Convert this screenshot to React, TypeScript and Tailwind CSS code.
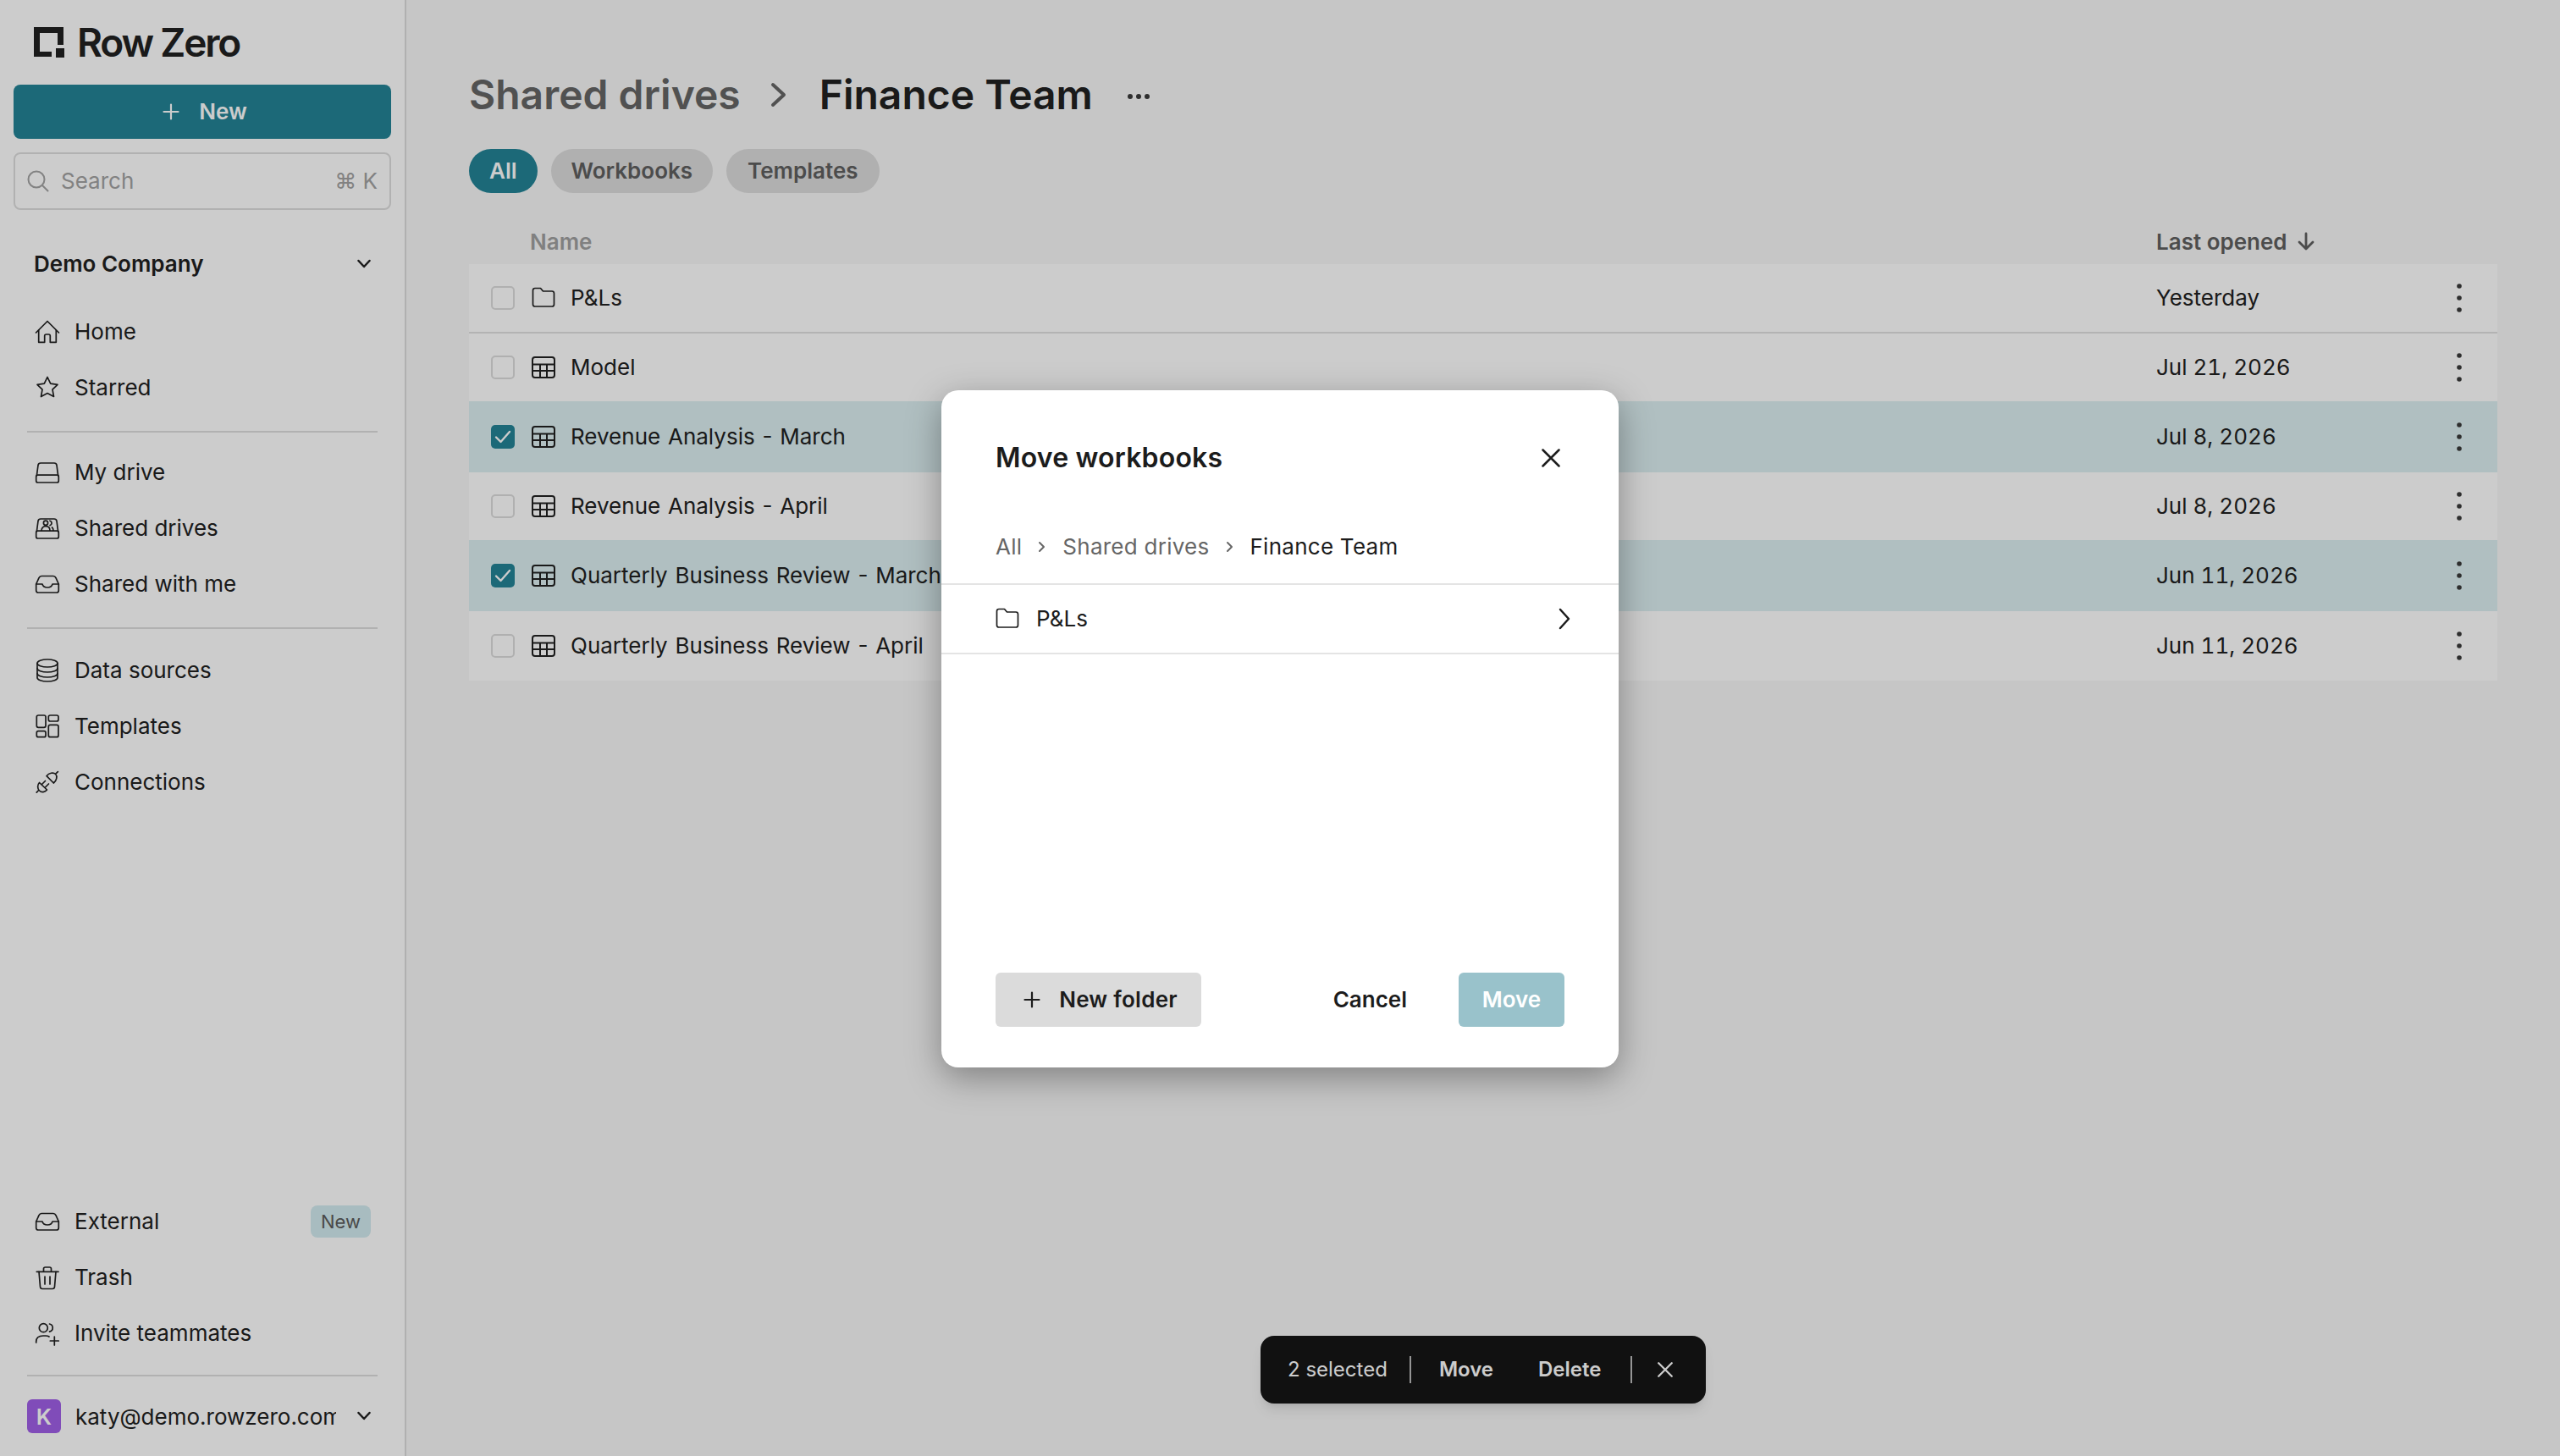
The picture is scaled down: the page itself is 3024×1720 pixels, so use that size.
const ink = "#212121";

const Icon = ({ children, size = 32, sw = 1.7 }: { children: React.ReactNode; size?: number; sw?: number }) => (
  <svg
    width={size}
    height={size}
    viewBox="0 0 32 32"
    fill="none"
    stroke="currentColor"
    strokeWidth={sw}
    strokeLinecap="round"
    strokeLinejoin="round"
    className="shrink-0"
  >
    {children}
  </svg>
);

const TrayIcon = () => (
  <Icon>
    <path d="M2.7 16 6 8.7Q7 6.5 9 6.5h14q2 0 3 2.2l3.3 7.3v7.5q0 2.5-2.5 2.5H5.2q-2.5 0-2.5-2.5z" />
    <path d="M2.7 16H10q1 4 6 4t6-4h7.3" />
  </Icon>
);

const DriveIcon = ({ shared }: { shared?: boolean }) => (
  <Icon>
    <rect x="2.7" y="19.2" width="26.6" height="8.8" rx="2" />
    <path d="M3.4 19.6 5 7.5Q5.4 5 8 5h16q2.6 0 3 2.5l1.6 12.1" />
    {shared && (
      <>
        <circle cx="14" cy="9.8" r="2.6" />
        <path d="M9 19c0-3.500 2-5.300 5-5.300s5 1.800 5 5.300M19 7.200a2.800 2.800 0 0 1 0 5.400M21.500 15c1 .8 1.500 2.200 1.500 4" />
      </>
    )}
  </Icon>
);

const navIcons: Record<string, React.ReactNode> = {
  Home: (
    <Icon>
      <path d="M2.5 17 16 3.5 29.5 17" />
      <path d="M5.7 14v14.3h7v-7.5q0-1.8 1.8-1.8h3q1.8 0 1.8 1.8v7.5h7V14" />
    </Icon>
  ),
  Starred: (
    <Icon>
      <path d="m16 3.5 3.7 7.7 8.3 1.1-6 5.9 1.5 8.3-7.5-4-7.5 4 1.5-8.3-6-5.9 8.3-1.1z" />
    </Icon>
  ),
  "My drive": <DriveIcon />,
  "Shared drives": <DriveIcon shared />,
  "Shared with me": <TrayIcon />,
  "Data sources": (
    <Icon>
      <ellipse cx="16" cy="7.5" rx="12" ry="4.5" />
      <path d="M4 7.5v17c0 2.5 5.4 4.5 12 4.5s12-2 12-4.5v-17" />
      <path d="M4 13.5c0 2.5 5.4 4.5 12 4.5s12-2 12-4.5M4 19.5c0 2.5 5.4 4.5 12 4.5s12-2 12-4.5" />
    </Icon>
  ),
  Templates: (
    <Icon>
      <rect x="3.3" y="3" width="10.7" height="14.3" rx="2" />
      <rect x="3.3" y="21.7" width="10.7" height="7" rx="2" />
      <rect x="17.3" y="3" width="11.7" height="7" rx="2" />
      <rect x="17.3" y="14.3" width="11.700" height="14.400" rx="2" />
    </Icon>
  ),
  Connections: (
    <Icon>
      <path d="M15 8.700 23.300 17C27 14 28 9 25.700 6.500 23 4 18 5 15 8.700zM25.700 6.200l2.700-2.600" />
      <path d="M6.500 16.500 15.500 25C13 28 9 28.500 6.500 26 4 23.500 4 19 6.500 16.500zM5.700 25.500 3.200 28.200M9.500 18.500l4-4M13.500 22l4-4" />
    </Icon>
  ),
  External: <TrayIcon />,
  Trash: (
    <Icon>
      <path d="M3.300 9.300h25.700M11.500 9V6q0-2 2-2h5q2 0 2 2v3" />
      <path d="m6 9.300 1.500 17.700q.2 2.500 2.500 2.500h12q2.300 0 2.500-2.500L26 9.300M13 15v9M19 15v9" />
    </Icon>
  ),
  "Invite teammates": (
    <Icon>
      <circle cx="11.300" cy="9.700" r="5" />
      <path d="M18.500 5a4.700 4.700 0 0 1 0 9.200M2.700 27v-1c0-4.500 3.300-7 8.300-7h3q2.500 0 4 1M24.300 20v10M19.300 25h10" />
    </Icon>
  ),
};

const FolderIcon = () => (
  <Icon>
    <path d="M3.500 7q0-2.500 2.500-2.500h6.500L15.500 8H26q2.500 0 2.500 2.500v13q0 2.500-2.500 2.500H6q-2.500 0-2.500-2.500z" />
  </Icon>
);

const TableIcon = () => (
  <Icon sw={2}>
    <rect x="3" y="4" width="26" height="24" rx="3" />
    <path d="M3 12.500h26M3 20h26M12 12.500V28M20 12.500V28" />
  </Icon>
);

const ChevronDown = () => (
  <svg width="16" height="12" viewBox="0 0 16 12" fill="none" stroke="currentColor" strokeWidth="2.500" strokeLinecap="round" strokeLinejoin="round">
    <path d="m1.500 2 6.500 7 6.500-7" />
  </svg>
);

const Close = ({ size = 22, sw = 2.500 }: { size?: number; sw?: number }) => (
  <svg width={size} height={size} viewBox="0 0 22 22" fill="none" stroke="currentColor" strokeWidth={sw} strokeLinecap="round">
    <path d="m1.500 1.500 19 19M20.500 1.500l-19 19" />
  </svg>
);

const Plus = ({ size = 20 }: { size?: number }) => (
  <svg width={size} height={size} viewBox="0 0 20 20" fill="none" stroke="currentColor" strokeWidth="2.200" strokeLinecap="round">
    <path d="M10 1.500v17M1.500 10h17" />
  </svg>
);

const NavItem = ({ label, badge }: { label: string; badge?: string }) => (
  <div className="flex h-[66px] items-center gap-[16px] pl-[40px] pr-[40px]">
    {navIcons[label]}
    <span className="text-[26px] leading-none">{label}</span>
    {badge && (
      <span className="ml-auto flex h-[38px] w-[71px] items-center justify-center rounded-lg bg-[#d3ebf0] text-[22px] text-[#5c5c5c]">
        {badge}
      </span>
    )}
  </div>
);

const Divider = () => <div className="mx-[32px] h-[2px] bg-[#dedede]" />;

const Sidebar = () => (
  <aside className="flex h-full w-[480px] shrink-0 flex-col border-r-2 border-[#dcdcdc] bg-white">
    <div className="flex h-[100px] items-start gap-[15px] pl-[40px] pt-[32px]">
      <svg width="36" height="36" viewBox="0 0 36 36" className="shrink-0" fill={ink}>
        <path d="M0 0h35v21h-7V7H7v22h14v6H0z" />
        <rect x="26" y="25" width="10" height="11" />
      </svg>
      <span className="text-[46px] font-semibold leading-[36px] tracking-[-0.047em]">Row Zero</span>
    </div>
    <div className="flex flex-col gap-[16px] px-[16px]">
      <button className="flex h-[64px] items-center justify-center gap-[23px] rounded-lg bg-[#238497] pb-[1px] pl-[6px] text-[26px] font-semibold text-white">
        <Plus />
        New
      </button>
      <div className="flex h-[68px] items-center rounded-lg border-2 border-[#dedede] pb-[1px] pl-[14px] pr-[14px] text-[26px] text-[#a3a3a3]">
        <svg width="26" height="26" viewBox="0 0 26 26" fill="none" stroke="currentColor" strokeWidth="2" strokeLinecap="round">
          <circle cx="11" cy="11" r="9.500" />
          <path d="m18 18 6.500 6.500" />
        </svg>
        <span className="ml-[14px]">Search</span>
        <span className="ml-auto">⌘ K</span>
      </div>
    </div>
    <div className="mt-[32px] flex h-[64px] items-center justify-between pb-[1px] pl-[40px] pr-[40px]">
      <span className="text-[26px] font-semibold">Demo Company</span>
      <ChevronDown />
    </div>
    <div className="mb-[18px] mt-[15px]">
      <NavItem label="Home" />
      <NavItem label="Starred" />
    </div>
    <Divider />
    <div className="mb-[18px] mt-[14px]">
      <NavItem label="My drive" />
      <NavItem label="Shared drives" />
      <NavItem label="Shared with me" />
    </div>
    <Divider />
    <div className="mt-[16px]">
      <NavItem label="Data sources" />
      <NavItem label="Templates" />
      <NavItem label="Connections" />
    </div>
    <div className="mb-[16px] mt-auto">
      <NavItem label="External" badge="New" />
      <NavItem label="Trash" />
      <NavItem label="Invite teammates" />
    </div>
    <Divider />
    <div className="flex h-[94px] items-center pl-[32px] pr-[40px]">
      <span className="flex h-[40px] w-[40px] shrink-0 items-center justify-center rounded-md bg-[#a05fe8] text-[26px] font-semibold text-white">
        K
      </span>
      <span className="ml-[17px] w-[308px] overflow-hidden whitespace-nowrap text-[26px]">
        katy@demo.rowzero.com
      </span>
      <span className="ml-auto">
        <ChevronDown />
      </span>
    </div>
  </aside>
);

const rows = [
  { name: "P&Ls", date: "Yesterday", folder: true },
  { name: "Model", date: "Jul 21, 2026" },
  { name: "Revenue Analysis - March", date: "Jul 8, 2026", selected: true },
  { name: "Revenue Analysis - April", date: "Jul 8, 2026" },
  { name: "Quarterly Business Review - March", date: "Jun 11, 2026", selected: true },
  { name: "Quarterly Business Review - April", date: "Jun 11, 2026", last: true },
];

const Row = ({ row }: { row: (typeof rows)[number] }) => (
  <div
    className={
      row.selected
        ? "-mt-[2px] flex h-[84px] items-center bg-[#dceff2] pl-[26px] pr-[42px]"
        : row.last
          ? "flex h-[82px] items-center bg-white pl-[26px] pr-[42px]"
          : "flex h-[82px] items-center border-b-2 border-[#e0e0e0] bg-white pl-[26px] pr-[42px]"
    }
  >
    {row.selected ? (
      <span className="flex h-[28px] w-[28px] shrink-0 items-center justify-center rounded-[5px] bg-[#238497] text-white">
        <svg width="20" height="16" viewBox="0 0 20 16" fill="none" stroke="currentColor" strokeWidth="2.400" strokeLinecap="round" strokeLinejoin="round">
          <path d="m2 8.500 5.500 5.500L18 2" />
        </svg>
      </span>
    ) : (
      <span className="h-[28px] w-[28px] shrink-0 rounded-[5px] border-2 border-[#dcdcdc] bg-white" />
    )}
    <span className="ml-[18px]">{row.folder ? <FolderIcon /> : <TableIcon />}</span>
    <span className="ml-[16px] pb-[2px] text-[26px] [word-spacing:1.500px]">{row.name}</span>
    <span className="ml-auto w-[355px] pb-[2px] text-[26px] tabular-nums">{row.date}</span>
    <svg width="6" height="34" viewBox="0 0 6 34" fill="#3a3a3a" className="shrink-0">
      <circle cx="3" cy="3" r="2.800" />
      <circle cx="3" cy="17" r="2.800" />
      <circle cx="3" cy="31" r="2.800" />
    </svg>
  </div>
);

const Main = () => (
  <main className="relative flex h-full min-w-0 flex-1 flex-col bg-[#f8f8f8] px-[74px]">
    <div className="mt-[84px] flex h-[56px] items-center text-[48px] font-semibold leading-none">
      <span className="text-[#666]">Shared drives</span>
      <svg width="20" height="30" viewBox="0 0 20 30" fill="none" stroke="#666" strokeWidth="4" strokeLinecap="round" strokeLinejoin="round" className="ml-[35px] mr-[38px]">
        <path d="m3 3 13 12L3 27" />
      </svg>
      <span>Finance Team</span>
      <svg width="30" height="8" viewBox="0 0 30 8" fill="#3a3a3a" className="ml-[39px] mt-[4px]">
        <circle cx="5" cy="4" r="3" />
        <circle cx="15" cy="4" r="3" />
        <circle cx="25" cy="4" r="3" />
      </svg>
    </div>
    <div className="mt-[36px] flex gap-[16px] text-[26px] font-semibold">
      <span className="flex h-[52px] items-center rounded-full bg-[#238497] px-[24px] pb-[1px] text-white">All</span>
      <span className="flex h-[52px] items-center rounded-full bg-[#dcdcdc] px-[24px] pb-[1px] text-[#606060]">Workbooks</span>
      <span className="flex h-[52px] items-center rounded-full bg-[#dcdcdc] px-[25px] pb-[1px] text-[#606060]">Templates</span>
    </div>
    <div className="flex h-[84px] items-center pt-[30px] text-[26px] font-semibold">
      <span className="ml-[72px] text-[#a0a0a0]">Name</span>
      <span className="ml-auto mr-[216px] flex w-[187px] items-center gap-[11px] whitespace-nowrap text-[#606060]">
        Last opened
        <svg width="22" height="22" viewBox="0 0 22 22" fill="none" stroke="currentColor" strokeWidth="2.800" strokeLinecap="round" strokeLinejoin="round" className="shrink-0">
          <path d="M11 2v18M3 12l8 8 8-8" />
        </svg>
      </span>
    </div>
    <div>
      {rows.map((row) => (
        <Row key={row.name} row={row} />
      ))}
    </div>
    <div className="absolute bottom-[62px] left-1/2 flex h-[80px] w-[526px] -translate-x-1/2 items-center rounded-2xl bg-[#161616] pl-[32px] text-[24px] text-white shadow-lg">
      <span>2 selected</span>
      <span className="ml-[26px] h-[32px] w-[2px] bg-[#bbb]" />
      <span className="ml-[33px] font-semibold">Move</span>
      <span className="ml-[53px] font-semibold">Delete</span>
      <span className="ml-[35px] h-[32px] w-[2px] bg-[#bbb]" />
      <span className="ml-[30px]">
        <Close size={18} sw={2.800} />
      </span>
    </div>
  </main>
);

const Modal = () => (
  <div className="flex h-[800px] w-[800px] flex-col rounded-[20px] bg-white text-[#1c1c1c] shadow-[0_12px_40px_rgba(0,0,0,0.35)]">
    <div className="flex h-[160px] items-center justify-between px-[64px] pb-[1px]">
      <h2 className="text-[32px] font-semibold tracking-[0.006em]">Move workbooks</h2>
      <span className="mr-[5px]">
        <Close />
      </span>
    </div>
    <div className="flex h-[68px] items-start px-[64px] pt-[8px] text-[26px] leading-[34px] tracking-[0.01em] text-[#666]">
      <span>All</span>
      <svg width="10" height="14" viewBox="0 0 10 14" fill="none" stroke="currentColor" strokeWidth="2" strokeLinecap="round" strokeLinejoin="round" className="mx-[19px] mt-[10px]">
        <path d="m2 2 5 5-5 5" />
      </svg>
      <span>Shared drives</span>
      <svg width="10" height="14" viewBox="0 0 10 14" fill="none" stroke="currentColor" strokeWidth="2" strokeLinecap="round" strokeLinejoin="round" className="mx-[19px] mt-[10px]">
        <path d="m2 2 5 5-5 5" />
      </svg>
      <span className="text-[#1c1c1c]">Finance Team</span>
    </div>
    <div className="flex h-[84px] items-center border-y-2 border-[#e4e4e4] pl-[62px] pr-[56px]">
      <FolderIcon />
      <span className="ml-[18px] pb-[1px] text-[26px]">P&amp;Ls</span>
      <svg width="16" height="26" viewBox="0 0 16 26" fill="none" stroke="currentColor" strokeWidth="2.500" strokeLinecap="round" strokeLinejoin="round" className="ml-auto">
        <path d="m3 2 10 11L3 24" />
      </svg>
    </div>
    <div className="mt-auto flex items-center px-[64px] pb-[48px] text-[26px] font-semibold">
      <button className="flex h-[64px] w-[243px] items-center justify-center gap-[22px] rounded-md bg-[#dbdbdb] pb-[1px] pl-[5px] tracking-[0.01em]">
        <Plus />
        New folder
      </button>
      <button className="ml-auto mr-[61px] pb-[1px]">Cancel</button>
      <button className="h-[64px] w-[125px] rounded-md bg-[#99c2cb] pb-[1px] text-white">Move</button>
    </div>
  </div>
);

export default function App() {
  return (
    <div className="relative flex h-[1720px] w-[3024px] overflow-hidden font-['Inter',sans-serif] text-[#212121]">
      <Sidebar />
      <Main />
      <div className="absolute inset-0 flex items-center justify-center bg-black/20 pt-[2px]">
        <Modal />
      </div>
    </div>
  );
}
